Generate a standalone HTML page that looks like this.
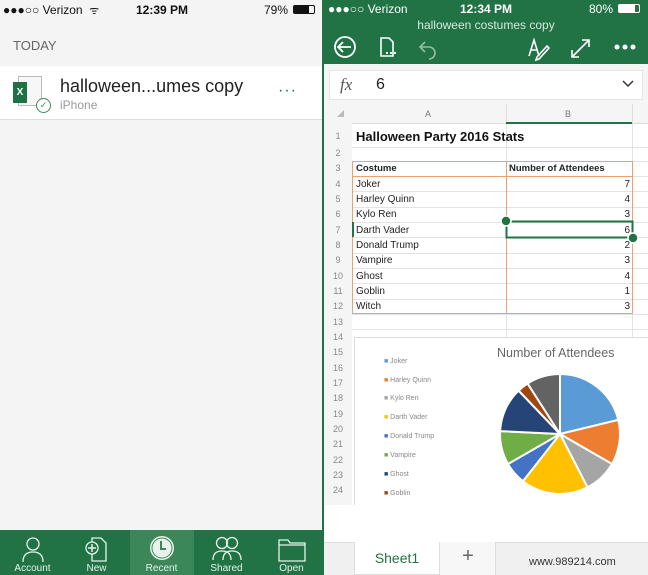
<!DOCTYPE html>
<html><head><meta charset="utf-8"><style>
*{margin:0;padding:0;box-sizing:border-box}
body{width:648px;height:575px;position:relative;overflow:hidden;font-family:"Liberation Sans",sans-serif;background:#fff}
.a{position:absolute}
.rh{position:absolute;left:324px;width:28px;text-align:center;font-size:9px;color:#888}
.ca{position:absolute;left:356px;font-size:10px;color:#222}
.cb{position:absolute;left:506px;width:124px;text-align:right;font-size:10px;color:#222}
.lg{position:absolute;left:384px;font-size:7px;color:#888}
.tb{position:absolute;top:530px;height:45px;width:65px;text-align:center;color:#e8f2ea;font-size:10px}
</style></head><body>
<!-- LEFT -->
<div class="a" style="left:0;top:0;width:324px;height:530px;background:#f4f4f4"></div>
<div class="a" style="left:3px;top:3px;font-size:12px;color:#111">●●●○○ Verizon ︎ <span style="font-size:11px">ᯤ</span></div>
<div class="a" style="left:136px;top:3px;font-size:12px;font-weight:bold;color:#111">12:39 PM</div>
<div class="a" style="left:264px;top:3px;font-size:12px;color:#111">79%</div>
<div class="a" style="left:293px;top:5px;width:22px;height:9px;border:1px solid #111;border-radius:2px"><div style="width:15px;height:7px;background:#111"></div></div>
<div class="a" style="left:13px;top:38px;font-size:13px;color:#666">TODAY</div>
<div class="a" style="left:0;top:66px;width:324px;height:54px;background:#fff;border-bottom:1px solid #ddd"></div>
<div class="a" style="left:18px;top:76px;width:24px;height:30px;border:1px solid #bbb;background:#f7f7f7"></div>
<div class="a" style="left:13px;top:82px;width:14px;height:21px;background:#1e7145;color:#fff;font-size:10px;font-weight:bold;text-align:center;line-height:21px">X</div>
<div class="a" style="left:36px;top:98px;width:15px;height:15px;border:1.5px solid #3a8a5a;border-radius:50%;background:#fff;color:#3a8a5a;font-size:9px;text-align:center;line-height:12px">✓</div>
<div class="a" style="left:60px;top:76px;font-size:18px;color:#222">halloween...umes copy</div>
<div class="a" style="left:60px;top:98px;font-size:12px;color:#999">iPhone</div>
<div class="a" style="left:278px;top:82px;font-size:16px;color:#217346;letter-spacing:1px">···</div>
<div class="a" style="left:0;top:530px;width:324px;height:45px;background:#217346"></div>
<div class="a" style="left:130px;top:530px;width:64px;height:45px;background:#3b8759"></div>
<div class="tb" style="left:0"><svg width="30" height="30" viewBox="0 0 30 30" style="margin-top:4px"><circle cx="15" cy="10" r="6" fill="none" stroke="#e8f2ea" stroke-width="1.3"/><path d="M5 28 Q5 18 15 18 Q25 18 25 28" fill="none" stroke="#e8f2ea" stroke-width="1.3"/></svg><div style="margin-top:-4px">Account</div></div>
<div class="tb" style="left:64px"><svg width="30" height="30" viewBox="0 0 30 30" style="margin-top:4px"><path d="M10 4h9l5 5v18h-14z" fill="none" stroke="#e8f2ea" stroke-width="1.3"/><circle cx="10" cy="14" r="6" fill="#217346" stroke="#e8f2ea" stroke-width="1.3"/><path d="M10 10v8M6 14h8" stroke="#e8f2ea" stroke-width="1.5"/></svg><div style="margin-top:-4px">New</div></div>
<div class="tb" style="left:129px"><svg width="30" height="30" viewBox="0 0 30 30" style="margin-top:4px"><circle cx="15" cy="14" r="12" fill="#e8f2ea"/><circle cx="15" cy="14" r="10" fill="none" stroke="#3b8759" stroke-width="1"/><path d="M14 7v8h5" fill="none" stroke="#3b8759" stroke-width="2"/></svg><div style="margin-top:-4px">Recent</div></div>
<div class="tb" style="left:194px"><svg width="34" height="30" viewBox="0 0 34 30" style="margin-top:4px"><circle cx="12" cy="9" r="5.5" fill="none" stroke="#e8f2ea" stroke-width="1.3"/><circle cx="22" cy="9" r="5.5" fill="none" stroke="#e8f2ea" stroke-width="1.3"/><path d="M3 26Q3 17 12 17Q21 17 21 26M13 26Q13 17 22 17Q31 17 31 26" fill="none" stroke="#e8f2ea" stroke-width="1.3"/></svg><div style="margin-top:-4px">Shared</div></div>
<div class="tb" style="left:259px"><svg width="30" height="30" viewBox="0 0 30 30" style="margin-top:4px"><path d="M2 6h9l2 3h15v18H2z" fill="none" stroke="#e8f2ea" stroke-width="1.3"/><path d="M2 11h26" stroke="#e8f2ea" stroke-width="1.3"/></svg><div style="margin-top:-4px">Open</div></div>
<!-- divider -->
<div class="a" style="left:322px;top:0;width:2px;height:575px;background:#217346"></div>
<!-- RIGHT -->
<div class="a" style="left:324px;top:0;width:324px;height:64px;background:#217346"></div>
<div class="a" style="left:328px;top:2px;font-size:12px;color:#fff">●●●○○ Verizon ︎</div>
<div class="a" style="left:460px;top:2px;font-size:12px;font-weight:bold;color:#fff">12:34 PM</div>
<div class="a" style="left:589px;top:2px;font-size:12px;color:#fff">80%</div>
<div class="a" style="left:618px;top:4px;width:22px;height:9px;border:1px solid #fff;border-radius:2px"><div style="width:16px;height:7px;background:#fff"></div></div>
<div class="a" style="left:324px;top:18px;width:324px;text-align:center;font-size:12px;color:#d6e8dc">halloween costumes copy</div>
<svg class="a" style="left:324px;top:32px" width="324" height="30">
<circle cx="21" cy="15" r="10" fill="none" stroke="#fff" stroke-width="1.8"/><path d="M27 15H15M19 10l-5 5 5 5" fill="none" stroke="#fff" stroke-width="1.8"/>
<path d="M57 6h8l4 4v14H57z" fill="none" stroke="#fff" stroke-width="1.6"/><path d="M62 21h2M66 21h2M70 21h2" stroke="#fff" stroke-width="2"/>
<path d="M101 10l-5 5 5 5M96 15h9a6 6 0 0 1 0 12" fill="none" stroke="#8fbf9e" stroke-width="1.6"/>
<path d="M205 24l5-16 5 16M207 18h6M213 25l10-11 2 2-10 11-3 1z" fill="none" stroke="#fff" stroke-width="1.6"/>
<path d="M248 25l16-16M258 8h7v7M248 18v7h7" fill="none" stroke="#fff" stroke-width="1.6"/>
<circle cx="293" cy="15" r="2.5" fill="#fff"/><circle cx="301" cy="15" r="2.5" fill="#fff"/><circle cx="309" cy="15" r="2.5" fill="#fff"/>
</svg>
<div class="a" style="left:324px;top:64px;width:324px;height:441px;background:#f5f5f5"></div>
<div class="a" style="left:329px;top:70px;width:314px;height:30px;background:#fff;border:1px solid #e6e6e6"></div>
<div class="a" style="left:340px;top:75px;font-family:'Liberation Serif',serif;font-style:italic;font-size:17px;color:#555">fx</div>
<div class="a" style="left:376px;top:76px;font-size:16px;color:#222">6</div>
<svg class="a" style="left:622px;top:80px" width="12" height="8"><path d="M1 1l5 5 5-5" fill="none" stroke="#333" stroke-width="1.5"/></svg>
<!-- grid -->
<div class="a" style="left:352px;top:104px;width:296px;height:401px;background:#fff"></div>
<div class="a" style="left:352px;top:104px;width:296px;height:20px;background:#f5f5f5;border-bottom:1px solid #ddd"></div>
<div class="a" style="left:506px;top:104px;width:1px;height:20px;background:#ddd"></div>
<div class="a" style="left:632px;top:104px;width:1px;height:20px;background:#ddd"></div>
<div class="a" style="left:506px;top:122px;width:126px;height:2px;background:#217346"></div>
<div class="a" style="left:425px;top:109px;font-size:9px;color:#777">A</div>
<div class="a" style="left:565px;top:109px;font-size:9px;color:#777">B</div>
<svg class="a" style="left:337px;top:110px" width="8" height="8"><path d="M7 0v7H0z" fill="#bbb"/></svg>
<svg class="a" style="left:352px;top:124px" width="296" height="215">
<g stroke="#e3e3e3" stroke-width="1">
<path d="M0 23.5H296M0 37.5H296M0 52.5H296M0 67.5H296M0 83.5H296M0 98.5H296M0 113.5H296M0 129.5H296M0 144.5H296M0 159.5H296M0 175.5H296M0 190.5H296M0 205.5H296"/>
<path d="M154.5 0V215M280.5 0V215"/>
</g>
<rect x="0.5" y="37.5" width="280" height="152" fill="none" stroke="#f0a070" stroke-width="1"/>
<path d="M154.5 37.5V190" stroke="#f0a070"/>
<path d="M0 52.5H280" stroke="#f0a070"/>
<rect x="154.5" y="97.5" width="126" height="16" fill="none" stroke="#217346" stroke-width="2"/>
<circle cx="154" cy="97" r="5" fill="#217346" stroke="#fff" stroke-width="1.5"/>
<circle cx="281" cy="114" r="5" fill="#217346" stroke="#fff" stroke-width="1.5"/>
<rect x="0" y="98" width="2" height="15" fill="#217346"/>
</svg>
<div class="rh" style="top:131px">1</div><div class="rh" style="top:148px">2</div><div class="rh" style="top:163px">3</div><div class="rh" style="top:179px">4</div><div class="rh" style="top:194px">5</div><div class="rh" style="top:209px">6</div><div class="rh" style="top:225px">7</div><div class="rh" style="top:240px">8</div><div class="rh" style="top:255px">9</div><div class="rh" style="top:271px">10</div><div class="rh" style="top:286px">11</div><div class="rh" style="top:301px">12</div><div class="rh" style="top:317px">13</div><div class="rh" style="top:332px">14</div><div class="rh" style="top:347px">15</div><div class="rh" style="top:363px">16</div><div class="rh" style="top:378px">17</div><div class="rh" style="top:393px">18</div><div class="rh" style="top:409px">19</div><div class="rh" style="top:424px">20</div><div class="rh" style="top:439px">21</div><div class="rh" style="top:455px">22</div><div class="rh" style="top:470px">23</div><div class="rh" style="top:485px">24</div>
<div class="ca" style="top:129px;font-size:13px;font-weight:bold;color:#111">Halloween Party 2016 Stats</div>
<div class="ca" style="top:163px;font-weight:bold;font-size:9.5px">Costume</div>
<div class="a" style="left:509px;top:163px;font-weight:bold;font-size:9.5px;color:#222">Number of Attendees</div>
<div class="ca" style="top:179px">Joker</div><div class="cb" style="top:179px">7</div>
<div class="ca" style="top:194px">Harley Quinn</div><div class="cb" style="top:194px">4</div>
<div class="ca" style="top:209px">Kylo Ren</div><div class="cb" style="top:209px">3</div>
<div class="ca" style="top:225px">Darth Vader</div><div class="cb" style="top:225px">6</div>
<div class="ca" style="top:240px">Donald Trump</div><div class="cb" style="top:240px">2</div>
<div class="ca" style="top:255px">Vampire</div><div class="cb" style="top:255px">3</div>
<div class="ca" style="top:271px">Ghost</div><div class="cb" style="top:271px">4</div>
<div class="ca" style="top:286px">Goblin</div><div class="cb" style="top:286px">1</div>
<div class="ca" style="top:301px">Witch</div><div class="cb" style="top:301px">3</div>
<!-- chart -->
<div class="a" style="left:354px;top:337px;width:294px;height:168px;background:#fff;border-top:1px solid #ddd;border-left:1px solid #ddd"></div>
<div class="a" style="left:497px;top:346px;font-size:12.5px;color:#666">Number of Attendees</div>
<div class="lg" style="top:358px"><span style="color:#5b9bd5">■</span> Joker</div>
<div class="lg" style="top:377px"><span style="color:#ed7d31">■</span> Harley Quinn</div>
<div class="lg" style="top:395px"><span style="color:#a5a5a5">■</span> Kylo Ren</div>
<div class="lg" style="top:414px"><span style="color:#ffc000">■</span> Darth Vader</div>
<div class="lg" style="top:433px"><span style="color:#4472c4">■</span> Donald Trump</div>
<div class="lg" style="top:452px"><span style="color:#70ad47">■</span> Vampire</div>
<div class="lg" style="top:471px"><span style="color:#264478">■</span> Ghost</div>
<div class="lg" style="top:490px"><span style="color:#9e480e">■</span> Goblin</div>
<svg class="a" style="left:0;top:0" width="648" height="575">
<g stroke="#fff" stroke-width="2">
<path d="M560 434L560 374A60 60 0 0 1 618.3 419.9Z" fill="#5b9bd5"/>
<path d="M560 434L618.3 419.9A60 60 0 0 1 612 464Z" fill="#ed7d31"/>
<path d="M560 434L612 464A60 60 0 0 1 587.5 487.3Z" fill="#a5a5a5"/>
<path d="M560 434L587.5 487.3A60 60 0 0 1 522.9 481.2Z" fill="#ffc000"/>
<path d="M560 434L522.9 481.2A60 60 0 0 1 508 464Z" fill="#4472c4"/>
<path d="M560 434L508 464A60 60 0 0 1 500.1 431.1Z" fill="#70ad47"/>
<path d="M560 434L500.1 431.1A60 60 0 0 1 518.6 390.6Z" fill="#264478"/>
<path d="M560 434L518.6 390.6A60 60 0 0 1 527.6 383.5Z" fill="#9e480e"/>
<path d="M560 434L527.6 383.5A60 60 0 0 1 560 374Z" fill="#636363"/>
</g></svg>
<!-- sheet tabs -->
<div class="a" style="left:324px;top:505px;width:324px;height:70px;background:#fff"></div>
<div class="a" style="left:324px;top:542px;width:324px;height:33px;background:#f0f0f0;border-top:1px solid #ddd"></div>
<div class="a" style="left:354px;top:542px;width:86px;height:33px;background:#fff;border:1px solid #ddd;border-top:none"></div>
<div class="a" style="left:354px;top:550px;width:86px;text-align:center;font-size:14px;color:#217346">Sheet1</div>
<div class="a" style="left:440px;top:542px;width:56px;height:33px;background:#f7f7f7;border-right:1px solid #ddd"></div>
<div class="a" style="left:440px;top:545px;width:56px;text-align:center;font-size:20px;color:#666">+</div>
<div class="a" style="left:529px;top:556px;font-size:11px;color:#333">www.989214.com</div>
</body></html>
